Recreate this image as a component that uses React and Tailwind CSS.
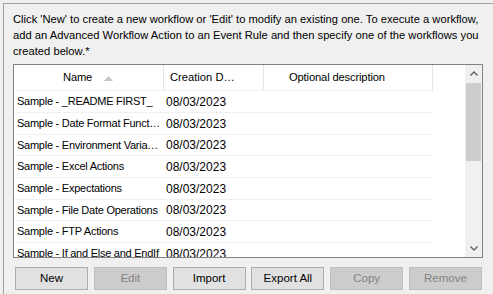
import React from "react";

const rows = [
  { name: "Sample - _README FIRST_", h: "h-[22px]" },
  { name: "Sample - Date Format Funct\u2026", h: "h-[22px]" },
  { name: "Sample - Environment Varia\u2026", h: "h-[21px]" },
  { name: "Sample - Excel Actions", h: "h-[22px]" },
  { name: "Sample - Expectations", h: "h-[22px]" },
  { name: "Sample - File Date Operations", h: "h-[21px]" },
  { name: "Sample - FTP Actions", h: "h-[22px]" },
  { name: "Sample - If and Else and EndIf", h: "h-[22px]" },
];

function Btn({ children, disabled }) {
  return (
    <div
      className={
        "w-[73px] h-[23px] flex items-center justify-center border text-[11.5px] " +
        (disabled
          ? "bg-[#cccccc] border-[#bfbfbf] text-[#838383]"
          : "bg-[#e1e1e1] border-[#adadad] text-black")
      }
    >
      {children}
    </div>
  );
}

export default function App() {
  return (
    <div
      className="w-[493px] h-[294px] bg-[#f0f0f0] overflow-hidden text-black"
      style={{ fontFamily: '"Liberation Sans", Arial, sans-serif' }}
    >
      <div className="ml-[3px] mt-[3px] h-[291px] border-l border-t border-[#a0a0a0] pl-[9px] pt-[7px]">
        <p className="text-[11.2px] leading-[16px] w-[480px] whitespace-nowrap">
          Click 'New' to create a new workflow or 'Edit' to modify an existing one. To execute a workflow,
          <br />
          add an Advanced Workflow Action to an Event Rule and then specify one of the workflows you
          <br />
          created below.*
        </p>
        <div className="mt-[5px] w-[470px] h-[194px] border border-[#828282] bg-white flex overflow-hidden">
          <div className="flex-1 flex flex-col">
            <div className="flex shrink-0 h-[26px] w-[419px] border-b border-[#f0f0f0] text-[11.2px]">
              <div className="w-[150px] border-r border-[#e5e5e5] flex items-center pl-[49px] relative">
                <span className="tracking-[-0.2px]">Name</span>
                <svg className="absolute left-[90px] top-[11px]" width="9" height="5" viewBox="0 0 9 5">
                  <path d="M0 5 L4.5 0 L9 5 Z" fill="#c4c4c4" />
                </svg>
              </div>
              <div className="w-[100px] border-r border-[#e5e5e5] flex items-center pl-[6px] whitespace-nowrap">
                {"Creation D\u2026"}
              </div>
              <div className="w-[169px] border-r border-[#e5e5e5] flex items-center pl-[25px] whitespace-nowrap tracking-[-0.15px]">
                Optional description
              </div>
            </div>
            {rows.map((r, i) => (
              <div
                key={i}
                className={"flex shrink-0 w-[419px] border-b border-[#f0f0f0] " + r.h}
              >
                <div className="w-[150px] pl-[3px] flex items-center whitespace-nowrap overflow-hidden text-[11px] tracking-[-0.25px]">
                  {r.name}
                </div>
                <div className="w-[100px] pl-[2px] flex items-center text-[12px]">08/03/2023</div>
                <div className="w-[169px]" />
              </div>
            ))}
          </div>
          <div className="w-[17px] bg-[#f0f0f0] flex flex-col">
            <div className="h-[17px] flex items-center justify-center">
              <svg width="8" height="5" viewBox="0 0 8 5">
                <path d="M0.5 4.5 L4 1 L7.5 4.5" stroke="#606060" strokeWidth="1.4" fill="none" />
              </svg>
            </div>
            <div className="mt-[1px] mx-[1px] h-[78px] bg-[#cdcdcd]" />
            <div className="flex-1" />
            <div className="h-[17px] flex items-center justify-center">
              <svg width="8" height="5" viewBox="0 0 8 5">
                <path d="M0.5 0.5 L4 4 L7.5 0.5" stroke="#606060" strokeWidth="1.4" fill="none" />
              </svg>
            </div>
          </div>
        </div>
        <div className="mt-[9px] ml-[2px] w-[467px] flex justify-between">
          <Btn>New</Btn>
          <Btn disabled>Edit</Btn>
          <Btn>Import</Btn>
          <Btn>Export All</Btn>
          <Btn disabled>Copy</Btn>
          <Btn disabled>Remove</Btn>
        </div>
      </div>
    </div>
  );
}
